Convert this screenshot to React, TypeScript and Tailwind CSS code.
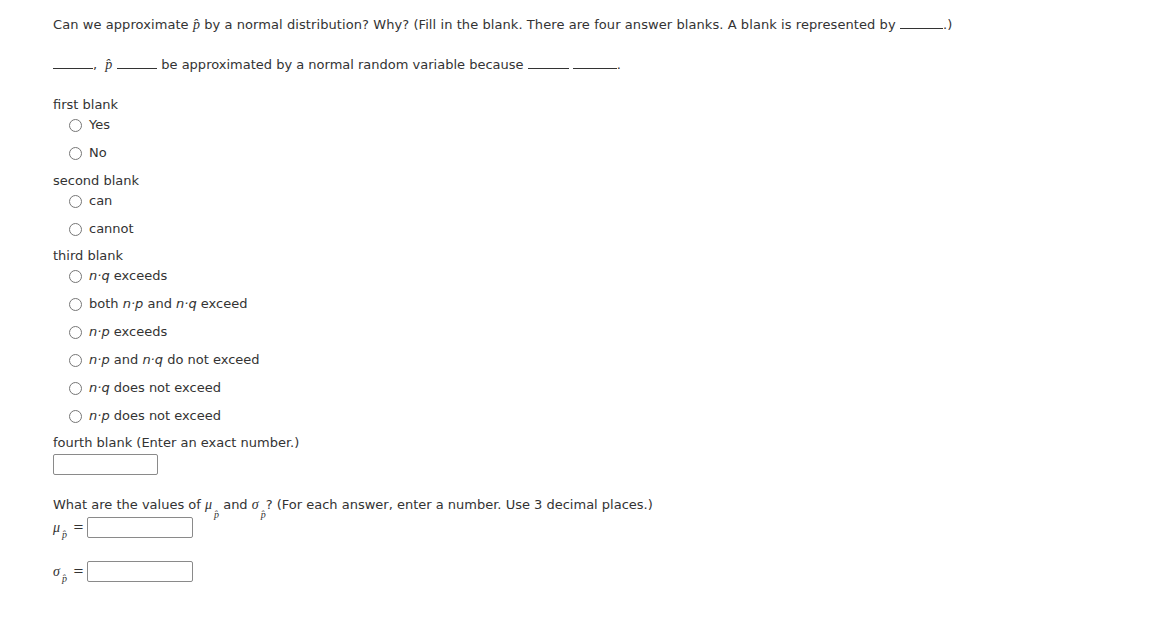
import React from "react";

const Radio = () => (
  <span className="inline-block w-[13px] h-[13px] rounded-full border border-[#767676] bg-white shrink-0" />
);

const PHat = ({ className = "" }: { className?: string }) => (
  <span className={"italic font-['Liberation_Serif',serif] text-[14px] " + className}>p̂</span>
);

const Blank = ({ w = 40 }: { w?: number }) => (
  <span className="inline-block border-b border-[#333] align-baseline" style={{ width: w, height: 1 }} />
);

const Np = ({ v }: { v: "p" | "q" }) => <span className="italic">n·{v}</span>;

const Option = ({ children }: { children: React.ReactNode }) => (
  <label className="flex items-center gap-[7px] h-[28px] pl-[16px]">
    <Radio />
    <span>{children}</span>
  </label>
);

const SubP = ({ sym }: { sym: string }) => (
  <span className="inline-flex items-start">
    <span className="italic font-['Liberation_Serif',serif] text-[14px]">{sym}</span>
    <span className="relative top-[10px] ml-[2px] italic font-['Liberation_Serif',serif] text-[10px]">p̂</span>
  </span>
);

export default function App() {
  return (
    <div className="min-h-screen bg-white text-[#333] font-['DejaVu_Sans',Verdana,sans-serif] text-[13px] pl-[53px] pt-[15px]">
      <p className="h-[20px] leading-[20px] tracking-[0.006em]">
        Can we approximate <PHat /> by a normal distribution? Why? (Fill in the blank. There are four answer blanks. A blank is represented by <Blank w={43} />.)
      </p>
      <p className="mt-[20px] h-[20px] leading-[20px]">
        <Blank w={40} />,<PHat className="ml-[8px] mr-[5px]" /><Blank w={40} /> be approximated by a normal random variable because <Blank w={41} /> <Blank w={44} />.
      </p>

      <div className="mt-[20px] leading-[20px]">first blank</div>
      <div className="-mt-[4px]">
        <Option>Yes</Option>
        <Option>No</Option>
      </div>

      <div className="leading-[20px] mt-[4px]">second blank</div>
      <div className="-mt-[4px]">
        <Option>can</Option>
        <Option>cannot</Option>
      </div>

      <div className="leading-[20px] mt-[3px]">third blank</div>
      <div className="-mt-[4px]">
        <Option>
          <Np v="q" /> exceeds
        </Option>
        <Option>
          both <Np v="p" /> and <Np v="q" /> exceed
        </Option>
        <Option>
          <Np v="p" /> exceeds
        </Option>
        <Option>
          <Np v="p" /> and <Np v="q" /> do not exceed
        </Option>
        <Option>
          <Np v="q" /> does not exceed
        </Option>
        <Option>
          <Np v="p" /> does not exceed
        </Option>
      </div>

      <div className="leading-[20px] mt-[3px]">fourth blank (Enter an exact number.)</div>
      <input className="block mt-[1px] w-[105px] h-[21px] border border-[#8a8a8a] rounded-[2px] bg-white" />

      <p className="mt-[20px] leading-[20px]">
        What are the values of <SubP sym="μ" /> and <SubP sym="σ" />? (For each answer, enter a number. Use 3 decimal places.)
      </p>

      <div className="flex items-center mt-[1px] h-[22px]">
        <span className="w-[34px] flex items-center gap-[6px]">
          <SubP sym="μ" />
          <span>=</span>
        </span>
        <input className="w-[106px] h-[21px] border border-[#8a8a8a] rounded-[2px] bg-white" />
      </div>

      <div className="flex items-center mt-[22px] h-[22px]">
        <span className="w-[34px] flex items-center gap-[6px]">
          <SubP sym="σ" />
          <span>=</span>
        </span>
        <input className="w-[106px] h-[21px] border border-[#8a8a8a] rounded-[2px] bg-white" />
      </div>
    </div>
  );
}
